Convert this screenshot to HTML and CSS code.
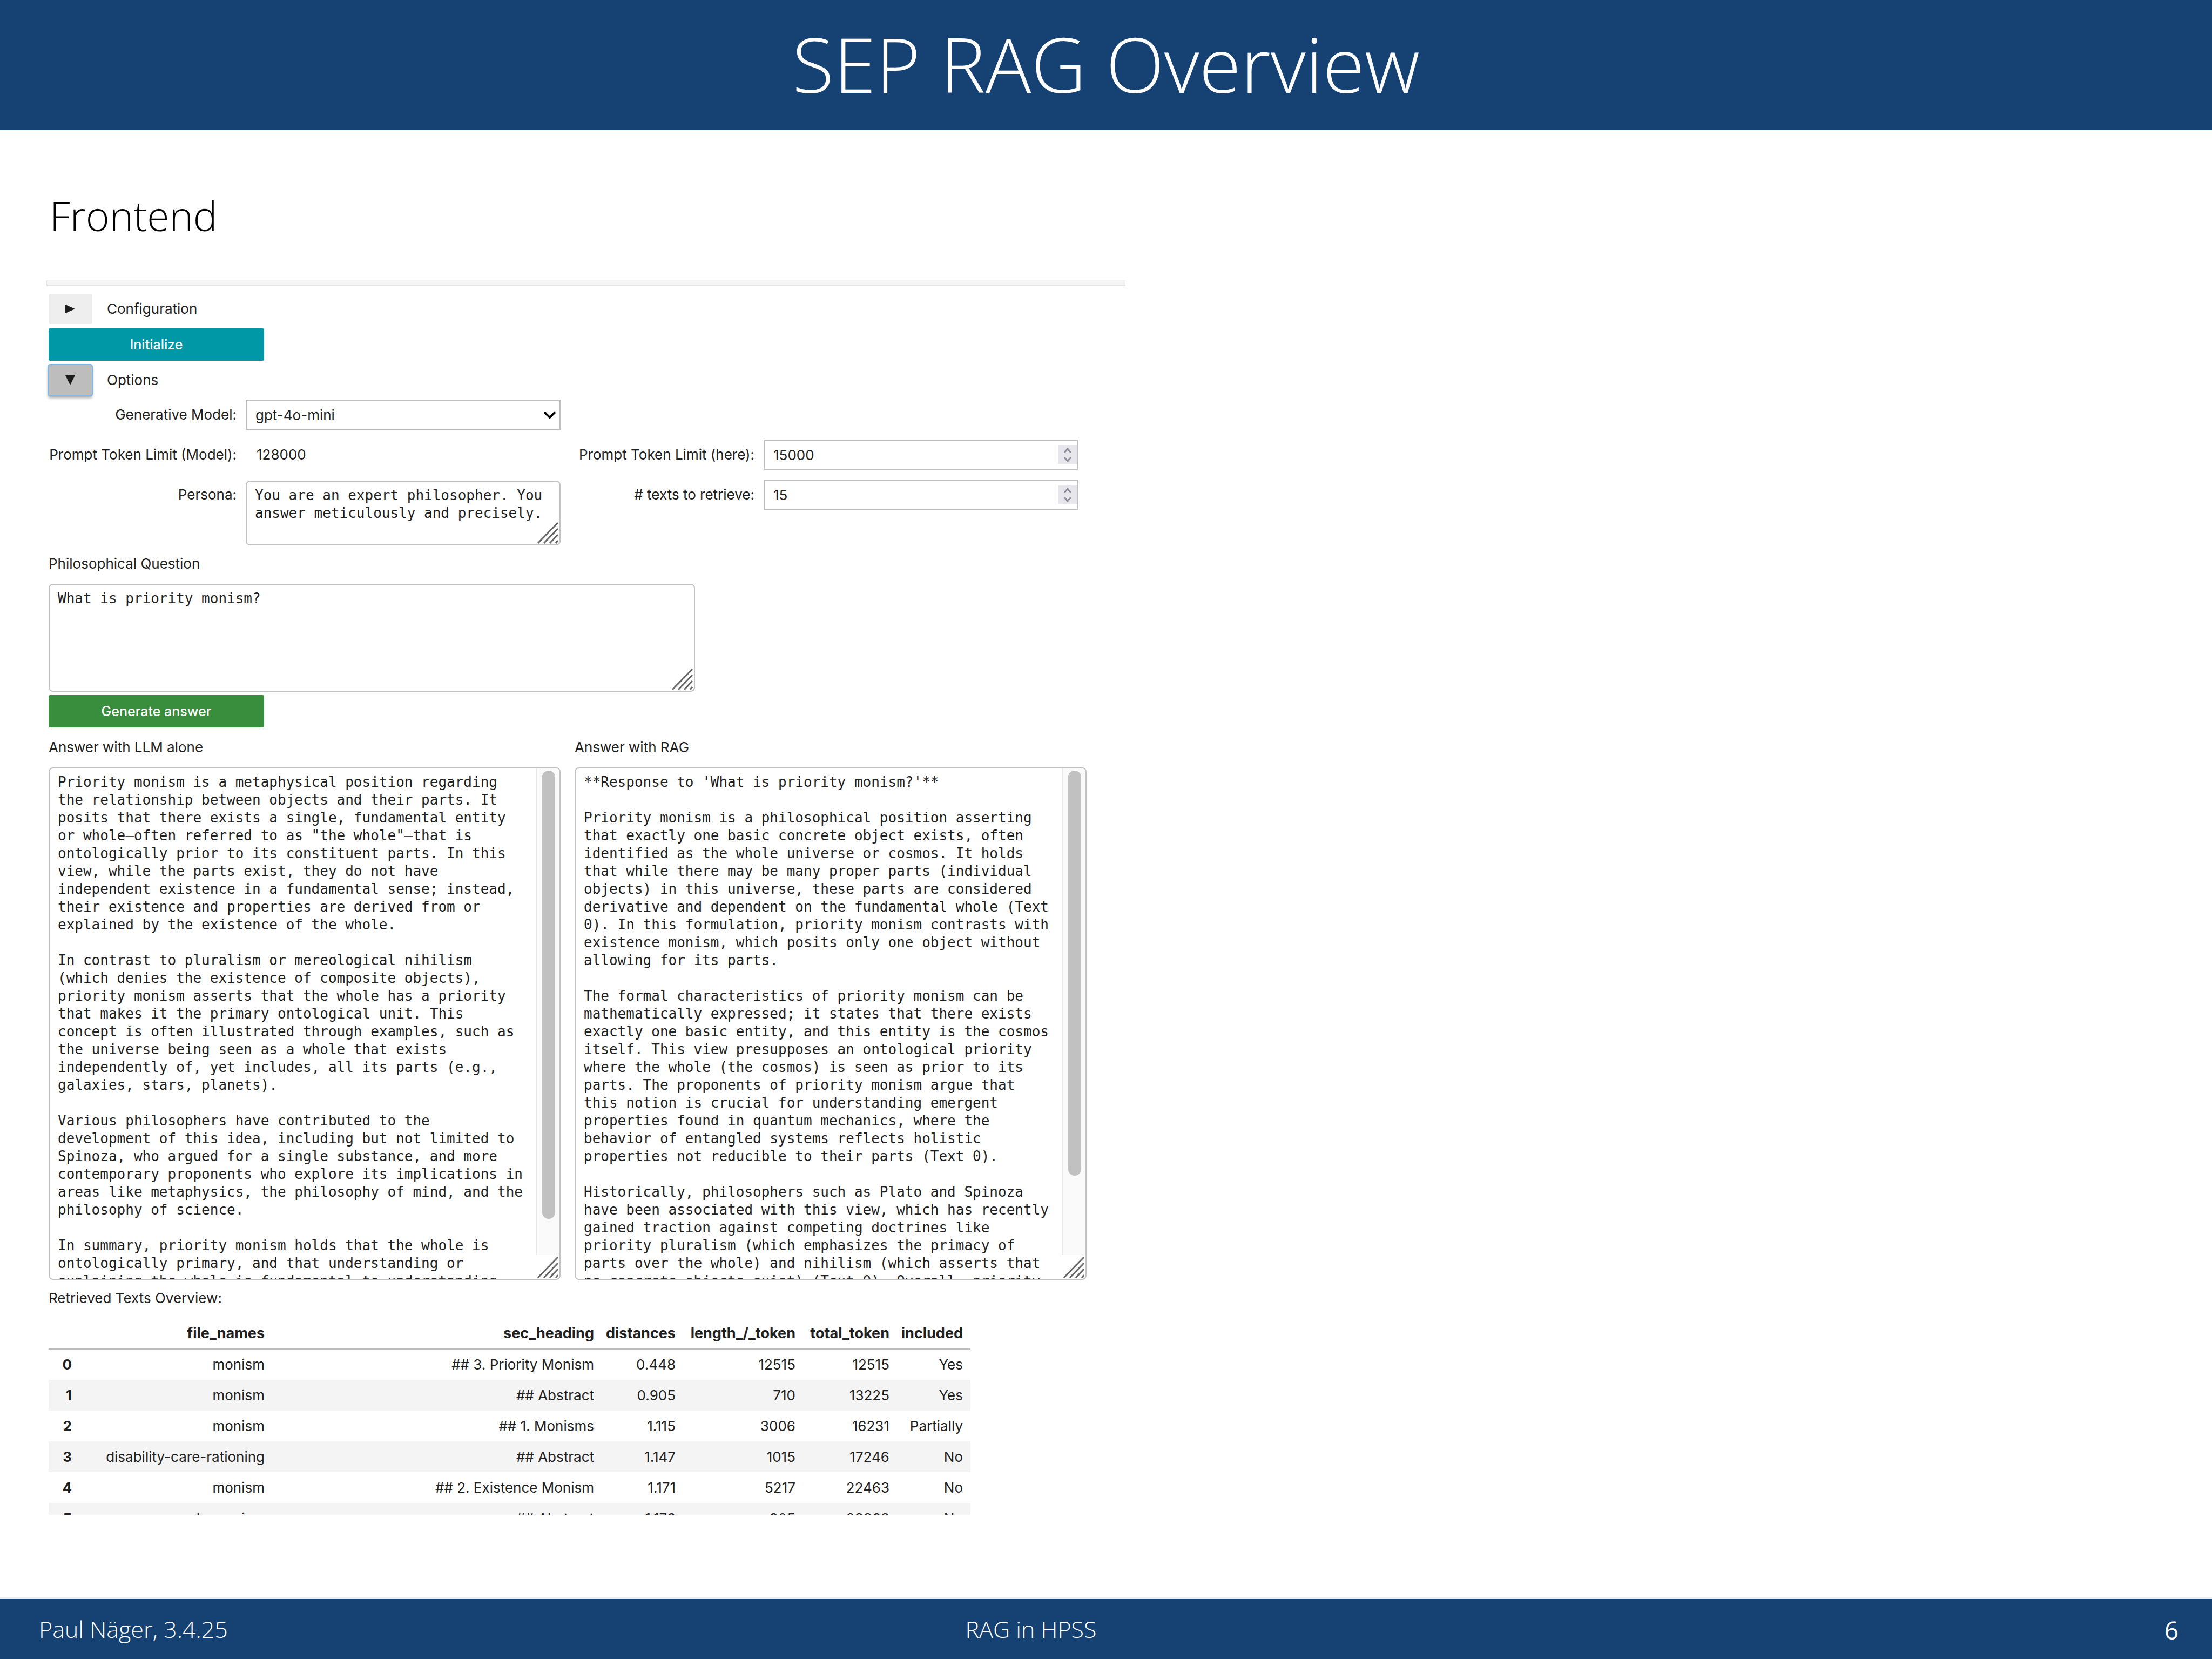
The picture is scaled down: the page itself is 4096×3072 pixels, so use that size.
FILE: index.html
```html
<!DOCTYPE html>
<html lang="en">
<head>
<meta charset="utf-8">
<meta name="viewport" content="width=device-width, initial-scale=1">
<title>SEP RAG Overview</title>
<link rel="stylesheet" href="styles.css">
</head>
<body>
<svg class="symbols" aria-hidden="true">
  <symbol id="grip" viewBox="0 0 44 44"><path d="M4 42 41 4M15 42 41 15M26 42 41 26M37 42 41 37"/></symbol>
  <symbol id="steps" viewBox="0 0 36 36"><path d="M12 14 18 7 24 14M12 23 18 30 24 23"/></symbol>
</svg>

<header class="slide-header"><h1>SEP RAG Overview</h1></header>

<main class="slide-body">
  <h2>Frontend</h2>
  <div class="notebook">
    <div class="cell-edge"></div>
    <form class="widgets">
      <div class="toggle-row">
        <button type="button" class="toggle" aria-label="Expand configuration"><svg viewBox="0 0 20 20"><path d="M1 2 19 10 1 18z"/></svg></button>
        <span>Configuration</span>
      </div>
      <button type="button" class="action action-info">Initialize</button>
      <div class="toggle-row">
        <button type="button" class="toggle toggle-active" aria-label="Collapse options"><svg viewBox="0 0 20 20"><path d="M1 1h18L10 19z"/></svg></button>
        <span>Options</span>
      </div>

      <div class="options">
        <div class="field">
          <label for="model">Generative Model:</label>
          <div class="control">
            <select id="model"><option>gpt-4o-mini</option></select>
            <svg class="chevron" viewBox="0 0 24 16"><path d="M2 3 12 13 22 3"/></svg>
          </div>
        </div>
        <div class="field field-new-row">
          <label for="limit-model">Prompt Token Limit (Model):</label>
          <output id="limit-model">128000</output>
        </div>
        <div class="field">
          <label for="limit-here">Prompt Token Limit (here):</label>
          <div class="control">
            <input id="limit-here" type="number" value="15000">
            <svg class="spinner"><use href="#steps"/></svg>
          </div>
        </div>
        <div class="field">
          <label for="persona">Persona:</label>
          <div class="control control-persona">
            <textarea id="persona">You are an expert philosopher. You answer meticulously and precisely.</textarea>
            <svg class="grip"><use href="#grip"/></svg>
          </div>
        </div>
        <div class="field">
          <label for="retrieve"># texts to retrieve:</label>
          <div class="control">
            <input id="retrieve" type="number" value="15">
            <svg class="spinner"><use href="#steps"/></svg>
          </div>
        </div>
      </div>

      <label class="title" for="question">Philosophical Question</label>
      <div class="control control-question">
        <textarea id="question">What is priority monism?</textarea>
        <svg class="grip"><use href="#grip"/></svg>
      </div>
      <button type="button" class="action action-success">Generate answer</button>

      <div class="answers">
        <div>
          <label class="title" for="answer-llm">Answer with LLM alone</label>
          <div class="control control-answer">
            <textarea id="answer-llm">Priority monism is a metaphysical position regarding the relationship between objects and their parts. It posits that there exists a single, fundamental entity or whole—often referred to as "the whole"—that is ontologically prior to its constituent parts. In this view, while the parts exist, they do not have independent existence in a fundamental sense; instead, their existence and properties are derived from or explained by the existence of the whole.

In contrast to pluralism or mereological nihilism (which denies the existence of composite objects), priority monism asserts that the whole has a priority that makes it the primary ontological unit. This concept is often illustrated through examples, such as the universe being seen as a whole that exists independently of, yet includes, all its parts (e.g., galaxies, stars, planets).

Various philosophers have contributed to the development of this idea, including but not limited to Spinoza, who argued for a single substance, and more contemporary proponents who explore its implications in areas like metaphysics, the philosophy of mind, and the philosophy of science.

In summary, priority monism holds that the whole is ontologically primary, and that understanding or explaining the whole is fundamental to understanding</textarea>
            <div class="scroll-track"><div class="scroll-thumb" style="height: 93%"></div></div>
            <svg class="grip"><use href="#grip"/></svg>
          </div>
        </div>
        <div>
          <label class="title" for="answer-rag">Answer with RAG</label>
          <div class="control control-answer">
            <textarea id="answer-rag">**Response to 'What is priority monism?'**

Priority monism is a philosophical position asserting that exactly one basic concrete object exists, often identified as the whole universe or cosmos. It holds that while there may be many proper parts (individual objects) in this universe, these parts are considered derivative and dependent on the fundamental whole (Text 0). In this formulation, priority monism contrasts with existence monism, which posits only one object without allowing for its parts.

The formal characteristics of priority monism can be mathematically expressed; it states that there exists exactly one basic entity, and this entity is the cosmos itself. This view presupposes an ontological priority where the whole (the cosmos) is seen as prior to its parts. The proponents of priority monism argue that this notion is crucial for understanding emergent properties found in quantum mechanics, where the behavior of entangled systems reflects holistic properties not reducible to their parts (Text 0).

Historically, philosophers such as Plato and Spinoza have been associated with this view, which has recently gained traction against competing doctrines like priority pluralism (which emphasizes the primacy of parts over the whole) and nihilism (which asserts that no concrete objects exist) (Text 0). Overall, priority</textarea>
            <div class="scroll-track"><div class="scroll-thumb" style="height: 84%"></div></div>
            <svg class="grip"><use href="#grip"/></svg>
          </div>
        </div>
      </div>
    </form>

    <p class="title">Retrieved Texts Overview:</p>
    <table>
      <thead>
        <tr><th class="c-index"></th><th class="c-file">file_names</th><th class="c-heading">sec_heading</th><th class="c-distance">distances</th><th class="c-length">length_/_token</th><th class="c-total">total_token</th><th class="c-included">included</th></tr>
      </thead>
      <tbody>
        <tr><th>0</th><td>monism</td><td>## 3. Priority Monism</td><td>0.448</td><td>12515</td><td>12515</td><td>Yes</td></tr>
        <tr><th>1</th><td>monism</td><td>## Abstract</td><td>0.905</td><td>710</td><td>13225</td><td>Yes</td></tr>
        <tr><th>2</th><td>monism</td><td>## 1. Monisms</td><td>1.115</td><td>3006</td><td>16231</td><td>Partially</td></tr>
        <tr><th>3</th><td>disability-care-rationing</td><td>## Abstract</td><td>1.147</td><td>1015</td><td>17246</td><td>No</td></tr>
        <tr><th>4</th><td>monism</td><td>## 2. Existence Monism</td><td>1.171</td><td>5217</td><td>22463</td><td>No</td></tr>
        <tr><th>5</th><td>humanism</td><td>## Abstract</td><td>1.176</td><td>905</td><td>23368</td><td>No</td></tr>
      </tbody>
    </table>
  </div>
</main>

<footer class="slide-footer">
  <span>Paul Näger, 3.4.25</span>
  <span>RAG in HPSS</span>
  <span class="page-number">6</span>
</footer>
</body>
</html>
```
FILE: styles.css
```css
* { box-sizing: border-box; }

body {
  margin: 0;
  height: 100vh;
  display: flex;
  flex-direction: column;
  background: #fff;
  color: #000;
  font-family: "Open Sans", sans-serif;
  font-weight: 300;
}

.symbols { display: none; }

.slide-header {
  flex: none;
  padding: 21px 0 28px;
  background: #164173;
  color: #fff;
  text-align: center;
}

h1 {
  margin: 0;
  font-size: 141px;
  font-weight: 300;
  line-height: 192px;
}

.slide-body {
  flex: 1;
  min-height: 0;
  display: flex;
  flex-direction: column;
  padding: 108px 86px 153px;
}

h2 {
  margin: 0 0 70px;
  padding-left: 6px;
  font-size: 75px;
  font-weight: 300;
  line-height: 100px;
}

.slide-footer {
  flex: none;
  display: grid;
  grid-template-columns: 433fr 467fr 100fr;
  align-items: center;
  height: 114px;
  padding: 0 62px 0 72px;
  border-top: 2px solid #eee;
  background: #164173;
  color: #fff;
  font-size: 43px;
}

.page-number {
  justify-self: end;
  padding-top: 4px;
  font-size: 46px;
  font-weight: 500;
}

/* Notebook output */
.notebook {
  flex: 1;
  min-height: 0;
  max-width: 1998px;
  overflow: hidden;
  color: #212121;
  font: 26px/34px Inter, sans-serif;
}

.cell-edge {
  height: 11px;
  margin-bottom: 14px;
  border-bottom: 3px solid #e4e4e4;
  border-left: 1px solid #e4e4e4;
  background: #f3f3f3;
}

.widgets,
.notebook > .title,
table { margin-left: 4px; }

.toggle-row {
  display: flex;
  align-items: center;
  gap: 28px;
  margin-bottom: 8px;
}

.toggle {
  display: grid;
  place-items: center;
  width: 80px;
  height: 56px;
  padding: 0;
  border: 0;
  border-radius: 3px;
  background: #eee;
}

.toggle svg { width: 20px; height: 20px; fill: #1c1c1c; }

.toggle-active {
  background: #bdbdbd;
  box-shadow: 0 0 0 2px #7ab8ee, 0 4px 5px 1px #aaa;
}

.action {
  display: block;
  width: 399px;
  height: 60px;
  margin-bottom: 8px;
  border: 0;
  border-radius: 3px;
  color: #fff;
  font: 500 25px Inter, sans-serif;
}

.action-info { background: #0097a7; }
.action-success { margin: 6px 0 3px; background: #388e3c; }

.options {
  display: grid;
  grid-template-columns: repeat(2, 948px);
  gap: 18px 11px;
}

.field {
  display: grid;
  grid-template-columns: 348px 583px;
  column-gap: 17px;
  align-items: start;
}

.field-new-row { grid-column: 1; }

.field label,
.field output { line-height: 56px; }
.field label { text-align: right; }
.field output { padding-left: 20px; }

.control { position: relative; }

input,
select {
  display: block;
  width: 100%;
  height: 56px;
  padding: 0 16px;
  border: 2px solid #bdbdbd;
  border-radius: 0;
  appearance: none;
  background: #fff;
  color: #212121;
  font: 26px Inter, sans-serif;
}

input { appearance: textfield; }
input::-webkit-inner-spin-button { display: none; }

.chevron {
  position: absolute;
  top: 20px;
  right: 8px;
  width: 24px;
  height: 16px;
  fill: none;
  stroke: #000;
  stroke-width: 4;
}

.spinner {
  position: absolute;
  top: 10px;
  right: 2px;
  width: 36px;
  height: 36px;
  background: #e8e6ed;
  fill: none;
  stroke: #8e8d99;
  stroke-width: 3;
}

textarea {
  display: block;
  width: 100%;
  height: 100%;
  padding: 9px 15px;
  border: 2px solid #c2c2c2;
  border-radius: 8px;
  resize: none;
  overflow: hidden;
  background: #fff;
  color: #212121;
  font: 26px/33px "DejaVu Sans Mono", monospace;
}

.control-persona { height: 120px; margin-top: 2px; }
.control-question { width: 1197px; height: 200px; }
.control-answer { height: 949px; }
.control-answer textarea { padding-right: 59px; }

.grip {
  position: absolute;
  right: 2px;
  bottom: 2px;
  width: 44px;
  height: 44px;
  fill: none;
  stroke: #666;
  stroke-width: 3;
}

.scroll-track {
  position: absolute;
  top: 2px;
  right: 2px;
  bottom: 46px;
  width: 44px;
  padding: 4px 8px 4px 10px;
  border-left: 2px solid #e8e8e8;
  border-top-right-radius: 6px;
  background: #fafafa;
}

.scroll-thumb {
  border-radius: 12px;
  background: #c1c1c1;
}

.title {
  display: block;
  margin-top: 0;
  margin-bottom: 3px;
  line-height: 68px;
}

.answers {
  display: grid;
  grid-template-columns: repeat(2, 948px);
  column-gap: 26px;
}

table {
  table-layout: fixed;
  width: 1707px;
  border-collapse: collapse;
}

th, td {
  height: 57px;
  padding: 0 14px;
  text-align: right;
  white-space: nowrap;
}

td { font-weight: 400; }
th { font-weight: 700; }
thead th { padding-left: 0; font-size: 27px; }
thead { border-bottom: 2px solid #bdbdbd; }
tbody tr:nth-child(even) { background: #f4f4f4; }

.c-index { width: 57px; }
.c-file { width: 357px; }
.c-heading { width: 610px; }
.c-distance { width: 151px; }
.c-length { width: 222px; }
.c-total { width: 174px; }
.c-included { width: 136px; }
```
